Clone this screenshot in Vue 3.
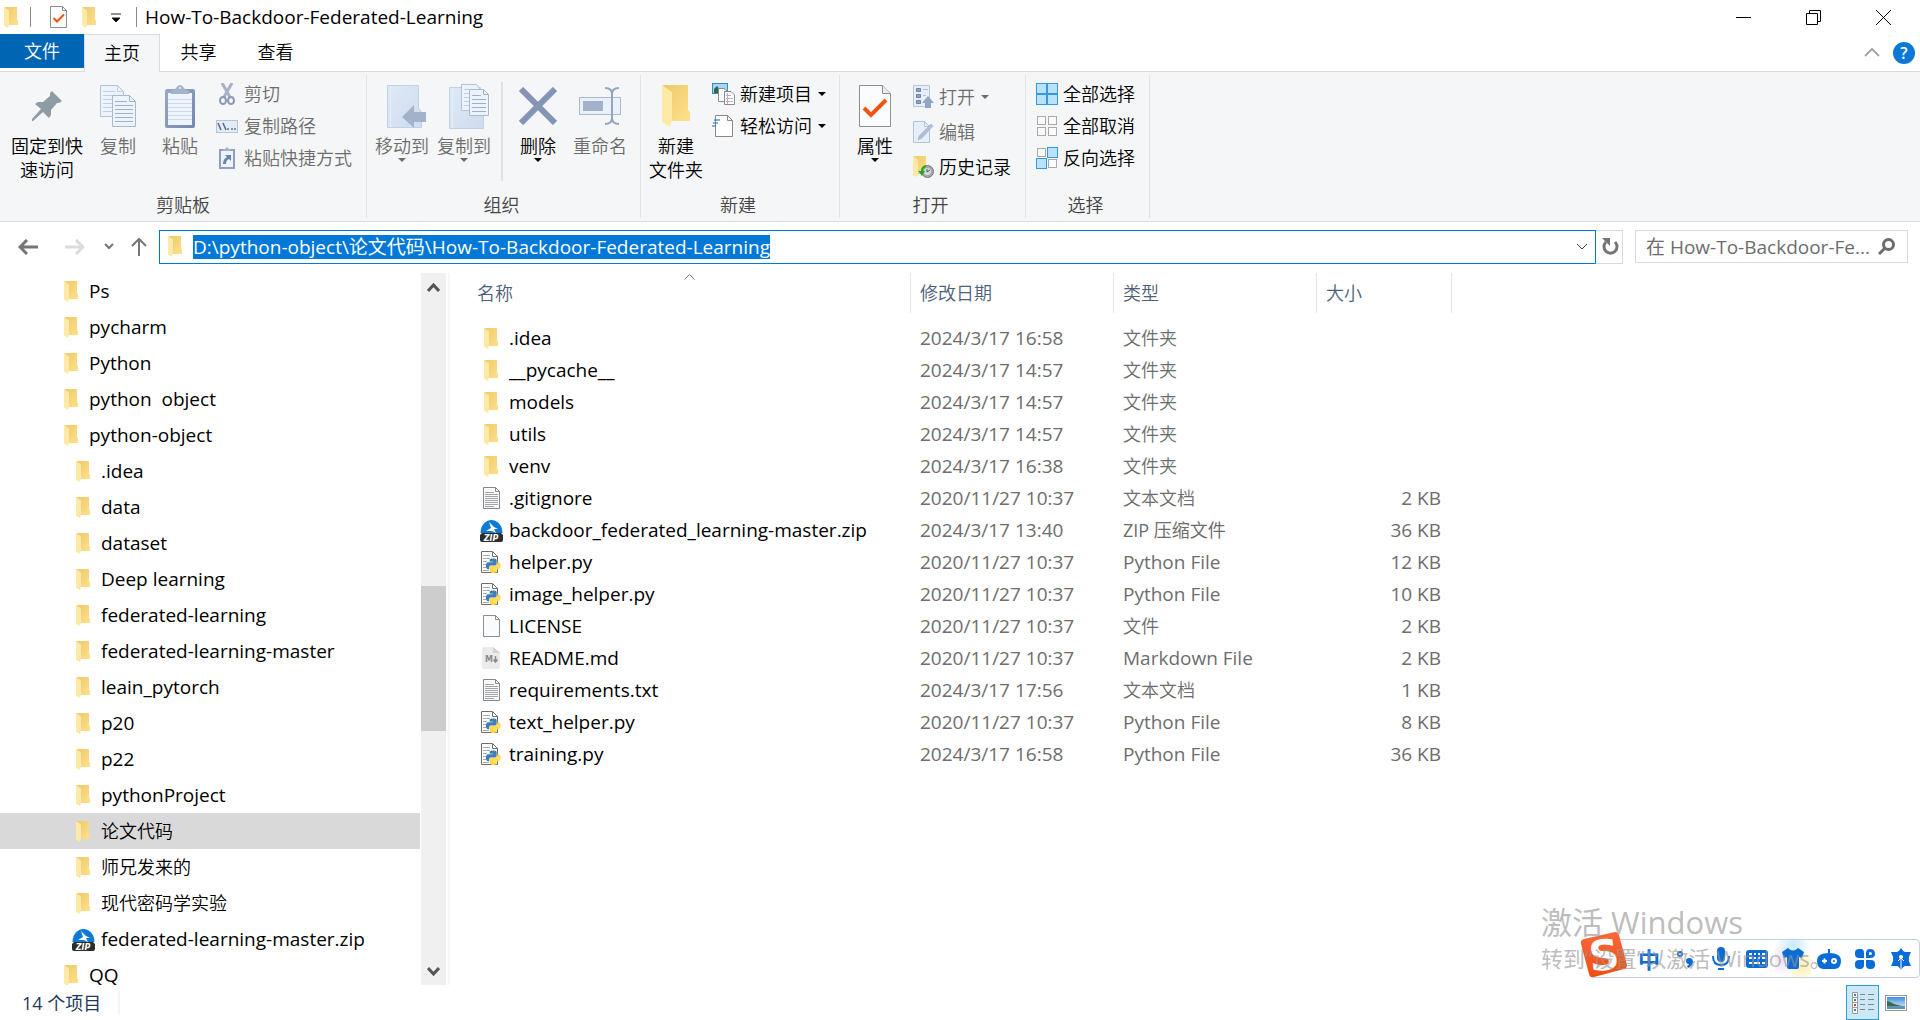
<script setup>
import { ref, onMounted } from 'vue'

const address = ref('D:\\python-object\\论文代码\\How-To-Backdoor-Federated-Learning')
const search = ref('')
const addressInput = ref(null)

onMounted(() => {
  addressInput.value.focus()
  addressInput.value.select()
})

// Latin-only names are set one pixel larger than Chinese ones
const isLatin = (text) => /^[\x20-\x7e]+$/.test(text)

const tabs = ['共享', '查看']

const tree = [
  { name: 'Ps', level: 0, icon: 'folder' },
  { name: 'pycharm', level: 0, icon: 'folder' },
  { name: 'Python', level: 0, icon: 'folder' },
  { name: 'python  object', level: 0, icon: 'folder' },
  { name: 'python-object', level: 0, icon: 'folder' },
  { name: '.idea', level: 1, icon: 'folder' },
  { name: 'data', level: 1, icon: 'folder' },
  { name: 'dataset', level: 1, icon: 'folder' },
  { name: 'Deep learning', level: 1, icon: 'folder' },
  { name: 'federated-learning', level: 1, icon: 'folder' },
  { name: 'federated-learning-master', level: 1, icon: 'folder' },
  { name: 'leain_pytorch', level: 1, icon: 'folder' },
  { name: 'p20', level: 1, icon: 'folder' },
  { name: 'p22', level: 1, icon: 'folder' },
  { name: 'pythonProject', level: 1, icon: 'folder' },
  { name: '论文代码', level: 1, icon: 'folder', selected: true },
  { name: '师兄发来的', level: 1, icon: 'folder' },
  { name: '现代密码学实验', level: 1, icon: 'folder' },
  { name: 'federated-learning-master.zip', level: 1, icon: 'zip' },
  { name: 'QQ', level: 0, icon: 'folder' },
]

const files = [
  { name: '.idea', date: '2024/3/17 16:58', type: '文件夹', size: '', icon: 'folder' },
  { name: '__pycache__', date: '2024/3/17 14:57', type: '文件夹', size: '', icon: 'folder' },
  { name: 'models', date: '2024/3/17 14:57', type: '文件夹', size: '', icon: 'folder' },
  { name: 'utils', date: '2024/3/17 14:57', type: '文件夹', size: '', icon: 'folder' },
  { name: 'venv', date: '2024/3/17 16:38', type: '文件夹', size: '', icon: 'folder' },
  { name: '.gitignore', date: '2020/11/27 10:37', type: '文本文档', size: '2 KB', icon: 'text' },
  { name: 'backdoor_federated_learning-master.zip', date: '2024/3/17 13:40', type: 'ZIP 压缩文件', size: '36 KB', icon: 'zip' },
  { name: 'helper.py', date: '2020/11/27 10:37', type: 'Python File', size: '12 KB', icon: 'python' },
  { name: 'image_helper.py', date: '2020/11/27 10:37', type: 'Python File', size: '10 KB', icon: 'python' },
  { name: 'LICENSE', date: '2020/11/27 10:37', type: '文件', size: '2 KB', icon: 'blank' },
  { name: 'README.md', date: '2020/11/27 10:37', type: 'Markdown File', size: '2 KB', icon: 'markdown' },
  { name: 'requirements.txt', date: '2024/3/17 17:56', type: '文本文档', size: '1 KB', icon: 'text' },
  { name: 'text_helper.py', date: '2020/11/27 10:37', type: 'Python File', size: '8 KB', icon: 'python' },
  { name: 'training.py', date: '2024/3/17 16:58', type: 'Python File', size: '36 KB', icon: 'python' },
]
</script>

<template>
  <div class="window">
    <!-- Shared icon symbols -->
    <svg class="sprite" width="0" height="0" aria-hidden="true">
      <defs>
        <linearGradient id="g-back" x1="0" y1="0" x2="1" y2="1">
          <stop offset="0" stop-color="#ecca6c" />
          <stop offset="1" stop-color="#ffe08a" />
        </linearGradient>
        <linearGradient id="g-slate" x1="0" y1="0" x2="1" y2="1">
          <stop offset="0" stop-color="#9aa9c6" />
          <stop offset="1" stop-color="#7487ae" />
        </linearGradient>
        <linearGradient id="g-pale" x1="0" y1="0" x2="1" y2="1">
          <stop offset="0" stop-color="#dfe9f6" />
          <stop offset="1" stop-color="#cfdcef" />
        </linearGradient>
        <linearGradient id="g-sky" x1="0" y1="0" x2="0" y2="1">
          <stop offset="0" stop-color="#3f8de0" />
          <stop offset="1" stop-color="#e8f4fd" />
        </linearGradient>
        <linearGradient id="g-orange" x1="0" y1="0" x2="0" y2="1">
          <stop offset="0" stop-color="#f9683a" />
          <stop offset="1" stop-color="#f04e10" />
        </linearGradient>
      </defs>

      <symbol id="i-folder" viewBox="0 0 28 42">
        <path d="M1 0H26V25L28 27V36H8z" fill="url(#g-back)" />
        <path d="M0 0L10 7V35L8 42L0 37z" fill="#ffe9a6" />
      </symbol>
      <symbol id="i-text" viewBox="0 0 17 22">
        <path d="M.5.5H12.5L16.5 4.5V21.5H.5z" fill="#f8f9fa" stroke="#84888b" />
        <path d="M12.5.5V4.5H16.5" fill="none" stroke="#84888b" />
        <path d="M2 5.5H11M2 7.5H15M2 9.5H15M2 11.5H15M2 13.5H15M2 15.5H15M2 17.5H15M2 19.5H11" stroke="#a3a6a9" />
      </symbol>
      <symbol id="i-blank" viewBox="0 0 17 22">
        <path d="M.5.5H12.5L16.5 4.5V21.5H.5z" fill="#fafbfc" stroke="#8b8f92" />
        <path d="M12.5.5V4.5H16.5" fill="none" stroke="#8b8f92" />
      </symbol>
      <symbol id="i-markdown" viewBox="0 0 18 22">
        <path d="M2 0H11L18 6V20Q18 22 16 22H2Q0 22 0 20V2Q0 0 2 0z" fill="#ebebeb" />
        <path d="M11 0L18 6H11z" fill="#d2d2d2" />
        <path d="M13.5 9V15M11.5 12.5L13.5 15L15.5 12.5" stroke="#8a8a8a" stroke-width="1.5" fill="none" />
      </symbol>
      <symbol id="i-python" viewBox="0 0 20 22">
        <path d="M.5.5H11.5L16.5 5.5V21.5H.5z" fill="#fff" stroke="#6e6e6e" />
        <path d="M11.5.5V5.5H16.5" fill="none" stroke="#6e6e6e" />
        <path d="M2 4.5H9M2 7.5H9M2 10.5H6M2 13.5H6M2 16.5H6M2 19.5H8" stroke="#a9a9a9" />
        <g transform="translate(5 7.500) scale(.6)">
          <path fill="#3d7db3" d="M14.250.18l.9.200.730.260.590.300.450.320.340.340.250.340.160.330.100.300.040.260.020.200-.010.130V8.500l-.050.630-.130.550-.210.460-.260.380-.300.310-.330.250-.350.190-.350.140-.330.100-.300.070-.260.040-.210.020H8.770l-.690.050-.590.140-.500.220-.410.270-.330.320-.270.350-.200.360-.150.370-.100.350-.070.320-.040.270-.020.210v3.060H3.170l-.210-.030-.280-.070-.320-.120-.350-.180-.360-.260-.360-.360-.350-.460-.320-.590-.280-.730-.210-.880-.140-1.050-.050-1.230.060-1.220.160-1.040.240-.870.320-.710.360-.570.400-.440.420-.330.420-.240.400-.160.360-.100.320-.050.240-.010h.160l.060.010h8.160v-.830H6.180l-.010-2.750-.020-.370.050-.340.110-.310.170-.280.250-.260.310-.230.380-.200.440-.180.510-.150.580-.120.640-.100.710-.060.770-.040.840-.020z" />
          <path fill="#ffda4b" d="M21.100 6.110l.280.060.320.120.350.180.360.270.360.350.350.470.320.590.280.730.210.880.140 1.040.050 1.230-.060 1.230-.160 1.040-.240.860-.320.710-.360.570-.400.450-.420.330-.420.240-.400.160-.360.090-.320.050-.240.020-.160-.010h-8.220v.820h5.840l.010 2.760.020.360-.050.340-.110.310-.170.290-.250.250-.310.240-.380.200-.440.170-.510.150-.580.130-.640.090-.710.070-.770.040-.840.010-1.270-.040-1.070-.140-.900-.200-.730-.250-.590-.300-.450-.330-.340-.340-.250-.340-.160-.330-.100-.300-.040-.250-.020-.200.010-.130v-5.340l.050-.640.130-.540.210-.460.260-.380.300-.320.330-.240.350-.200.350-.140.330-.100.300-.060.260-.040.210-.020.130-.010h5.840l.690-.050.590-.140.500-.210.410-.280.330-.320.270-.350.200-.360.150-.360.100-.350.070-.320.040-.280.020-.210V6.070h2.090z" />
        </g>
      </symbol>
      <symbol id="i-zip" viewBox="0 0 23 23">
        <path d="M.5 14A11 13 0 0 1 22.5 14z" fill="#0a7ad6" />
        <path d="M9 3L14 8L18 10L14 10L16 14L12 12L6 12L11 9z" fill="#fff" />
        <path d="M2 14H21L23 16V21Q23 23 21 23H2Q0 23 0 21V16z" fill="#2d2d2d" />
      </symbol>
      <symbol id="i-check" viewBox="0 0 32 42">
        <path d="M.5.5H23.500L31.500 8.500V41.500H.5z" fill="#fbfcfd" stroke="#8e8e8e" />
        <path d="M23.500.5V8.500H31.500" fill="#e9ebed" stroke="#8e8e8e" />
        <path d="M5 23L12 30L27 15" fill="none" stroke="#f25410" stroke-width="4" />
      </symbol>
      <symbol id="i-caret" viewBox="0 0 8 4">
        <path d="M0 0H8L4 4z" fill="currentColor" />
      </symbol>
    </svg>

    <!-- Title bar -->
    <header class="title-bar">
      <svg class="folder"><use href="#i-folder" /></svg>
      <span class="bar first"></span>
      <button class="quick props" aria-label="属性">
        <svg width="17" height="22" viewBox="0 0 17 22">
          <path d="M.5.5H12.500L16.500 4.500V21.500H.5z" fill="#fcfcfd" stroke="#8e8e8e" />
          <path d="M12.500.5V4.500H16.500" fill="none" stroke="#8e8e8e" />
          <path d="M3.500 12L7 15.500L14 8.500" fill="none" stroke="#f25410" stroke-width="2" />
        </svg>
      </button>
      <button class="quick" aria-label="新建文件夹"><svg class="folder"><use href="#i-folder" /></svg></button>
      <button class="quick more" aria-label="自定义快速访问工具栏">
        <svg width="10" height="9" viewBox="0 0 10 9"><path d="M0 1H10M1 5H9L5 9z" stroke="#222" stroke-width="1" /></svg>
      </button>
      <span class="bar"></span>
      <h1>How-To-Backdoor-Federated-Learning</h1>
      <div class="window-buttons">
        <button aria-label="最小化"><svg width="15" height="15"><path d="M0 7.500H15" stroke="#000" /></svg></button>
        <button aria-label="还原"><svg width="15" height="15" fill="none" stroke="#000"><path d="M.5 3.500H11.500V14.500H.5z" /><path d="M3.500 3.500V.5H14.500V11.500H11.500" /></svg></button>
        <button aria-label="关闭"><svg width="15" height="15"><path d="M0 0L15 15M15 0L0 15" stroke="#000" /></svg></button>
      </div>
    </header>

    <!-- Ribbon tabs -->
    <nav class="tabs">
      <button class="tab file">文件</button>
      <button class="tab active">主页</button>
      <button v-for="tab in tabs" :key="tab" class="tab">{{ tab }}</button>
      <div class="tab-tools">
        <button aria-label="最小化功能区"><svg width="16" height="9" viewBox="0 0 16 9"><path d="M1 8L8 1L15 8" fill="none" stroke="#a6a6a6" stroke-width="2" /></svg></button>
        <button class="help" aria-label="帮助">?</button>
      </div>
    </nav>

    <!-- Ribbon -->
    <section class="ribbon">
      <div class="group clipboard">
        <div class="group-body">
          <button class="big wide">
            <span class="pic"><svg width="30" height="30" viewBox="0 0 30 30"><path d="M20 0L30 10L27 12L25 12L19 19L19 24L17 27L11 21L1 30H0V28L9 18L3 13L6 11L11 11L18 5L18 2z" fill="#909ca3" /></svg></span>
            <span>固定到快</span><span>速访问</span>
          </button>
          <button class="big off">
            <span class="pic"><svg width="36" height="42" viewBox="0 0 36 42">
              <path d="M.5.5H17.500L23.500 6.500V31.500H.5z" fill="#edf3fb" stroke="#b3c2da" />
              <path d="M17.500.5V6.500H23.500M3 6.500H15M3 10.500H20M3 14.500H12M3 18.500H12M3 22.500H12M3 26.500H12" fill="none" stroke="#c2cfe3" />
              <path d="M12.500 10.500H29.500L35.500 16.500V41.500H12.500z" fill="#edf3fb" stroke="#a9b9d3" />
              <path d="M29.500 10.500V16.500H35.500M15 16.500H27M15 20.500H33M15 24.500H33M15 28.500H33M15 32.500H33M15 36.500H33" fill="none" stroke="#9fb0cc" />
            </svg></span>
            <span>复制</span>
          </button>
          <button class="big off">
            <span class="pic"><svg width="30" height="43" viewBox="0 0 30 43">
              <rect y="4" width="30" height="39" rx="2" fill="url(#g-slate)" />
              <rect x="3" y="8" width="24" height="32" fill="#edf4fc" />
              <path d="M3 14.500H27M3 18.500H27M3 22.500H27M3 26.500H27M3 30.500H27M3 34.500H27" stroke="#cdd8e8" />
              <path d="M6 9V6Q10 5 11 3Q15-3 19 3Q20 5 24 6V9z" fill="#a4b2cb" />
              <circle cx="15" cy="3" r="1" fill="#f5f6f7" />
            </svg></span>
            <span>粘贴</span>
          </button>
          <div class="small-list">
            <button class="small off"><span class="mini"><svg width="16" height="22" viewBox="0 0 16 22" fill="none"><path d="M3 0L11 14M13 0L5 14" stroke="#a7b2c6" stroke-width="3" /><ellipse cx="4" cy="17.500" rx="3" ry="3.500" stroke="#8998b6" stroke-width="2" /><ellipse cx="12" cy="17.500" rx="3" ry="3.500" stroke="#8998b6" stroke-width="2" /></svg></span>剪切</button>
            <button class="small off"><span class="mini"><svg width="22" height="13" viewBox="0 0 22 13"><rect x=".5" y=".5" width="21" height="12" fill="#e3edf9" stroke="#b6c3da" /><path d="M2 3L5 10M7 3L10 10" stroke="#52698f" stroke-width="1.500" /><path d="M11 9H13M15 9H17M18 9H20" stroke="#7f91b3" stroke-width="2" /></svg></span>复制路径</button>
            <button class="small off"><span class="mini"><svg width="16" height="22" viewBox="0 0 16 22"><rect x="1" y="3" width="14" height="18" fill="#edf4fc" stroke="#8ea0c1" stroke-width="2" /><path d="M4 4V2H6L8 0L10 2H12V4z" fill="#a4b2cb" /><path d="M6 8H12V14L10 12Q7 13 7 17H4Q4 12 8 10z" fill="#6f83aa" /></svg></span>粘贴快捷方式</button>
          </div>
        </div>
        <div class="group-name">剪贴板</div>
      </div>

      <div class="group organize">
        <div class="group-body">
          <button class="big off">
            <span class="pic"><svg width="48" height="43" viewBox="-9 0 48 43">
              <path d="M.5.5H31.500V23L34.500 27V42.500H.5z" fill="url(#g-pale)" stroke="#c3d1e6" /><path d="M3.500 1V42" stroke="#e6eef8" />
              <path d="M15 32L27 20V27H39V37H27V43z" fill="#a3b1cb" />
            </svg></span>
            <span>移动到</span><svg class="caret"><use href="#i-caret" /></svg>
          </button>
          <button class="big off">
            <span class="pic"><svg width="50" height="45" viewBox="-10 0 50 45">
              <path d="M.5 3.500H31.500V26H34.500V44.500H.5z" fill="url(#g-pale)" stroke="#c3d1e6" /><path d="M3.500 4V44" stroke="#e6eef8" />
              <path d="M12.500.5H27.500L31.500 5.500V26.500H12.500z" fill="#edf3fb" stroke="#b3c2da" />
              <path d="M15 5.500H25M15 9.500H20M15 13.500H20M15 17.500H20M15 21.500H20" stroke="#c2cfe3" />
              <path d="M20.500 5.500H34.500L39.500 10.500V31.500H20.500z" fill="#edf3fb" stroke="#a9b9d3" />
              <path d="M34.500 5.500V10.500H39.500M23 11.500H32M23 15.500H37M23 19.500H37M23 23.500H37M23 27.500H37" fill="none" stroke="#9fb0cc" />
            </svg></span>
            <span>复制到</span><svg class="caret"><use href="#i-caret" /></svg>
          </button>
          <span class="divider"></span>
          <button class="big">
            <span class="pic"><svg width="38" height="38" viewBox="0 0 38 38"><path d="M2 2L36 36M36 2L2 36" stroke="#8394b4" stroke-width="6" /></svg></span>
            <span>删除</span><svg class="caret"><use href="#i-caret" /></svg>
          </button>
          <button class="big off">
            <span class="pic"><svg width="42" height="38" viewBox="0 0 42 38">
              <rect x=".5" y="10.500" width="41" height="17" fill="#e9f1fb" stroke="#a9b9d3" /><rect x="4" y="14" width="20" height="10" fill="#a3b1cb" />
              <path d="M26 1Q33 1 33 7V31Q33 37 26 37M40 1Q33 1 33 7M33 31Q33 37 40 37" fill="none" stroke="#95a4c0" stroke-width="2" />
            </svg></span>
            <span>重命名</span>
          </button>
        </div>
        <div class="group-name">组织</div>
      </div>

      <div class="group create">
        <div class="group-body">
          <button class="big"><span class="pic"><svg width="28" height="42"><use href="#i-folder" /></svg></span><span>新建</span><span>文件夹</span></button>
          <div class="small-list">
            <button class="small"><span class="mini"><svg width="23" height="22" viewBox="0 0 23 22"><rect x=".5" y=".5" width="15" height="10" fill="#a8d7f1" stroke="#2f8bc0" /><path d="M2 10V6L5 3L8 7V10z" fill="#36654f" /><path d="M6.500 5.500H12L15.500 8.500V18.500H6.500z" fill="#fff" stroke="#8b8b8b" /><path d="M12.500 8.500H19L22.500 12V21.500H12.500z" fill="#fff" stroke="#8b8b8b" /><path d="M14 12.500H19M14 15.500H21M14 18.500H21" stroke="#9cb8d8" /><path d="M15.500 10V21" stroke="#e3a3a3" /></svg></span>新建项目<svg class="caret"><use href="#i-caret" /></svg></button>
            <button class="small"><span class="mini"><svg width="23" height="22" viewBox="0 0 23 22"><path d="M3.500.5H15.500L20.500 5.500V21.500H3.500z" fill="#fff" stroke="#888" /><path d="M15.500.5V5.500H20.500" fill="none" stroke="#888" /><path d="M2 5H8M1 8H6M0 11H4" stroke="#1b6cab" stroke-width="1" /></svg></span>轻松访问<svg class="caret"><use href="#i-caret" /></svg></button>
          </div>
        </div>
        <div class="group-name">新建</div>
      </div>

      <div class="group open">
        <div class="group-body">
          <button class="big"><span class="pic"><svg width="32" height="42"><use href="#i-check" /></svg></span><span>属性</span><svg class="caret"><use href="#i-caret" /></svg></button>
          <div class="small-list tall">
            <button class="small off"><span class="mini"><svg width="21" height="23" viewBox="0 0 21 23"><path d="M.5.5H16.500V21.500H.5z" fill="#e6eefa" stroke="#b9c7dd" /><path d="M3.500 3.500H7.500V6.500H3.500zM3.500 9.500H7.500V12.500H3.500zM3.500 15.500H7.500V18.500H3.500z" fill="#8fa2c2" stroke="#6f84aa" /><path d="M10 4.500H15M10 10.500H13" stroke="#b3c0d6" /><path d="M15 11L21 18H18V23H12V18H9z" fill="#93a4c3" /></svg></span>打开<svg class="caret"><use href="#i-caret" /></svg></button>
            <button class="small off"><span class="mini"><svg width="21" height="22" viewBox="0 0 21 22"><path d="M.5.5H11.500L16.500 5.500V21.500H.5z" fill="#e6eefa" stroke="#b3c2da" /><path d="M11.500.5V5.500H16.500" fill="none" stroke="#b3c2da" /><path d="M5 19L6 15L18 3L20 5L9 17z" fill="#afbdd6" stroke="#98a9c7" stroke-width=".5" /></svg></span>编辑</button>
            <button class="small"><span class="mini"><svg width="21" height="22" viewBox="0 0 21 22"><path d="M1 0H13V18H4z" fill="url(#g-back)" /><path d="M0 0L5 4V19L4 21L0 19z" fill="#ffe9a6" /><circle cx="14.500" cy="15.500" r="6" fill="#a5a9ad" stroke="#74787c" /><circle cx="14.500" cy="15.500" r="3.500" fill="#d6d8da" /><path d="M14 13V16L17 14" fill="none" stroke="#555" /><path d="M13 9Q8 10 8 15H5L9 20L12 15H10Q10 12 13 11z" fill="#25a822" /></svg></span>历史记录</button>
          </div>
        </div>
        <div class="group-name">打开</div>
      </div>

      <div class="group select">
        <div class="group-body">
          <div class="small-list">
            <button class="small"><span class="mini"><svg width="22" height="22" viewBox="0 0 22 22" fill="#b9e2fd" stroke="#3797e0" stroke-width="1"><rect x=".5" y=".5" width="10" height="10" /><rect x="11.500" y=".5" width="10" height="10" /><rect x=".5" y="11.500" width="10" height="10" /><rect x="11.500" y="11.500" width="10" height="10" /></svg></span>全部选择</button>
            <button class="small"><span class="mini"><svg width="22" height="22" viewBox="0 0 22 22" fill="#fbfbfb" stroke="#a9a9a9"><rect x="1.500" y="1.500" width="8" height="8" /><rect x="12.500" y="1.500" width="8" height="8" /><rect x="1.500" y="12.500" width="8" height="8" /><rect x="12.500" y="12.500" width="8" height="8" /></svg></span>全部取消</button>
            <button class="small"><span class="mini"><svg width="22" height="22" viewBox="0 0 22 22" fill="#fbfbfb" stroke="#a9a9a9"><rect x="1.500" y="1.500" width="8" height="8" /><rect x="12.500" y="12.500" width="8" height="8" /><g fill="#b9e2fd" stroke="#3797e0"><rect x="11.500" y=".5" width="10" height="10" /><rect x=".5" y="11.500" width="10" height="10" /></g></svg></span>反向选择</button>
          </div>
        </div>
        <div class="group-name">选择</div>
      </div>
    </section>

    <!-- Address row -->
    <section class="address-row">
      <div class="history">
        <button aria-label="后退"><svg width="20" height="16" viewBox="0 0 20 16" fill="none" stroke="#757575" stroke-width="3"><path d="M2 8H20M9 1L2 8L9 15" /></svg></button>
        <button aria-label="前进"><svg width="20" height="16" viewBox="0 0 20 16" fill="none" stroke="#dcdcdc" stroke-width="3"><path d="M0 8H18M11 1L18 8L11 15" /></svg></button>
        <button aria-label="最近浏览的位置"><svg width="10" height="7" viewBox="0 0 10 7" fill="none" stroke="#757575" stroke-width="2"><path d="M1 1L5 5L9 1" /></svg></button>
        <button aria-label="上移"><svg width="16" height="19" viewBox="0 0 16 19" fill="none" stroke="#757575" stroke-width="2"><path d="M8 19V2M1 9L8 2L15 9" /></svg></button>
      </div>
      <div class="address">
        <svg class="folder"><use href="#i-folder" /></svg>
        <input ref="addressInput" v-model="address" aria-label="地址" spellcheck="false" />
        <button aria-label="以前的位置"><svg width="12" height="7" viewBox="0 0 12 7" fill="none" stroke="#444" stroke-width="1"><path d="M1 1L6 6L11 1" /></svg></button>
      </div>
      <button class="refresh" aria-label="刷新"><svg width="18" height="18" viewBox="0 0 18 18"><path d="M4 4A6.500 6.500 0 1 0 13 4" fill="none" stroke="#757575" stroke-width="3" /><path d="M0 0H8V8z" fill="#757575" /></svg></button>
      <label class="search">
        <input v-model="search" placeholder="在 How-To-Backdoor-Fe..." aria-label="搜索" />
        <svg width="17" height="17" viewBox="0 0 17 17" fill="none" stroke="#6d6d6d"><circle cx="10.500" cy="6.500" r="5" stroke-width="3" /><path d="M7 10L1 16" stroke-width="3" /></svg>
      </label>
    </section>

    <!-- Folder tree and file list -->
    <main class="content">
      <nav class="tree" aria-label="导航窗格">
        <ul>
          <li v-for="node in tree" :key="node.name + node.level">
            <a href="#" class="node" :class="{ nested: node.level === 1, selected: node.selected, latin: isLatin(node.name) }">
              <span class="icon">
                <svg :class="node.icon">
                  <use :href="'#i-' + node.icon" />
                  <text v-if="node.icon === 'zip'" class="badge zip-badge" x="11" y="22">ZIP</text>
                </svg>
              </span>{{ node.name }}
            </a>
          </li>
        </ul>
      </nav>
      <div class="scrollbar">
        <button aria-label="向上滚动"><svg width="13" height="9" viewBox="0 0 13 9" fill="none" stroke="#555" stroke-width="3"><path d="M1 8L6.500 2L12 8" /></svg></button>
        <div class="track"><span class="before"></span><span class="thumb"></span><span class="after"></span></div>
        <button aria-label="向下滚动"><svg width="13" height="9" viewBox="0 0 13 9" fill="none" stroke="#555" stroke-width="3"><path d="M1 1L6.500 7L12 1" /></svg></button>
      </div>
      <section class="files">
        <table>
          <colgroup><col class="c-name" /><col class="c-date" /><col class="c-date" /><col class="c-size" /></colgroup>
          <thead>
            <tr>
              <th scope="col"><div>名称<svg class="sort" width="11" height="6" viewBox="0 0 11 6"><path d="M.5 5.500L5.500.5L10.500 5.500" fill="none" stroke="#777" /></svg></div></th>
              <th scope="col"><div>修改日期</div></th>
              <th scope="col"><div>类型</div></th>
              <th scope="col"><div>大小</div></th>
            </tr>
          </thead>
          <tbody>
            <tr v-for="file in files" :key="file.name">
              <td class="name latin">
                <div>
                  <span class="icon">
                    <svg :class="file.icon">
                      <use :href="'#i-' + file.icon" />
                      <text v-if="file.icon === 'zip'" class="badge zip-badge" x="11" y="22">ZIP</text>
                      <text v-if="file.icon === 'markdown'" class="badge md-badge" x="3" y="15">M</text>
                    </svg>
                  </span>{{ file.name }}
                </div>
              </td>
              <td class="latin">{{ file.date }}</td>
              <td :class="{ latin: isLatin(file.type), mixed: file.icon === 'zip' }">{{ file.type }}</td>
              <td class="size latin">{{ file.size }}</td>
            </tr>
          </tbody>
        </table>
      </section>
    </main>

    <!-- Status bar -->
    <footer class="status">
      <span class="count">14 个项目</span>
      <div class="views">
        <button class="view on" aria-label="详细信息"><svg width="22" height="22" viewBox="0 0 22 22"><path d="M.5.5H5.500V21.500H.5zM.5 5.500H5.500M.5 10.500H5.500M.5 15.500H5.500" fill="#fff" stroke="#9a9a9a" /><path d="M2 3H4M2 18H4" stroke="#3b78b5" stroke-width="2" /><path d="M2 8H4" stroke="#4d8f3e" stroke-width="2" /><path d="M2 13H4" stroke="#b5482d" stroke-width="2" /><path d="M8 2.500H13M16 2.500H22M8 7.500H13M16 7.500H22M8 12.500H13M16 12.500H22M8 17.500H13M16 17.500H22" stroke="#7d8a90" /></svg></button>
        <button class="view" aria-label="大图标"><svg width="22" height="16" viewBox="0 0 22 16"><rect x=".5" y=".5" width="21" height="15" fill="#fff" stroke="#9a9a9a" /><rect x="2" y="2" width="18" height="12" fill="url(#g-sky)" /><path d="M2 6Q6 7 9 9L17 11H2z" fill="#3f6a4a" /><path d="M2 11H20V14H2z" fill="#5d93b4" /></svg></button>
      </div>
    </footer>

    <!-- Floating input-method bar -->
    <aside class="ime">
      <svg class="logo" width="48" height="46" viewBox="0 0 48 46">
        <path d="M4 7L35 0Q38 0 39 3L47 33Q47 36 44 37L14 45Q10 46 9 42L1 12Q0 8 4 7z" fill="url(#g-orange)" />
        <text x="24" y="38" text-anchor="middle" transform="rotate(-6 24 23)" font-family="DejaVu Sans" font-weight="700" font-size="42" fill="#fff">S</text>
      </svg>
      <button class="lang">中</button>
      <button aria-label="标点"><svg width="18" height="18" viewBox="0 0 18 18"><circle cx="4" cy="4" r="2" fill="none" stroke="#0a6cd6" stroke-width="2" /><path d="M13 8Q17 8 17 12Q16 16 12 18L11 16Q13 15 13 14Q10 14 10 11Q10 8 13 8z" fill="#0a6cd6" /></svg></button>
      <button aria-label="语音"><svg width="18" height="24" viewBox="0 0 18 24" fill="none"><rect x="5" y="0" width="8" height="15" rx="4" fill="#0a6cd6" /><path d="M1 9Q1 18 9 18Q17 18 17 9" stroke="#0a6cd6" stroke-width="2" /><path d="M6 22H12" stroke="#0a6cd6" stroke-width="2" /></svg></button>
      <button aria-label="键盘"><svg width="22" height="18" viewBox="0 0 22 18"><rect width="22" height="18" rx="3" fill="#0a6cd6" /><path d="M3 4H6M8 4H10M12 4H14M16 4H19M3 8H6M8 8H10M12 8H14M16 8H19M3 13H6M8 13H14M16 13H19" stroke="#fff" stroke-width="2" /></svg></button>
      <button class="skin" aria-label="皮肤"><svg width="22" height="21" viewBox="0 0 22 21"><path d="M6 0Q11 5 16 0L22 4L20 10L17 9V19Q17 21 15 21H7Q5 21 5 19V9L2 10L0 4z" fill="#0a6cd6" /></svg></button>
      <button aria-label="智能助手"><svg width="24" height="20" viewBox="0 0 24 20"><path d="M12 0V6" stroke="#0a6cd6" stroke-width="2" /><path d="M12 4Q24 4 24 12Q24 19 18 20H6Q0 19 0 12Q0 4 12 4z" fill="#0a6cd6" /><path d="M5 12H10M7.500 9.500V14.500" stroke="#fff" stroke-width="2" /><circle cx="17" cy="12" r="2" fill="none" stroke="#fff" stroke-width="2" /></svg></button>
      <button aria-label="工具箱"><svg width="20" height="20" viewBox="0 0 20 20" fill="#0a6cd6"><path d="M4 0H6Q9 0 9 4V9H4Q0 9 0 5V4Q0 0 4 0z" /><path d="M15 1.500Q18.500 1.500 18.500 5Q18.500 7.500 15 7.500H12.500V4Q12.500 1.500 15 1.500z" fill="none" stroke="#0a6cd6" stroke-width="3" /><path d="M4 11H9V16Q9 20 5 20H4Q0 20 0 16V15Q0 11 4 11z" /><path d="M11 11H16Q20 11 20 15V16Q20 20 16 20H15Q11 20 11 16z" /></svg></button>
      <button aria-label="设置"><svg width="20" height="22" viewBox="0 0 20 22"><path d="M10 0L13 4H20L17 11L20 18H13L10 22L7 18H0L3 11L0 4H7z" fill="#0a6cd6" /><circle cx="10" cy="11" r="8" fill="#0a6cd6" /><circle cx="10" cy="9" r="2" fill="#fff" /><path d="M10 22V10M7 13L10 10L13 13" fill="none" stroke="#fff" stroke-width="1" /></svg></button>
    </aside>

    <!-- Activation notice -->
    <div class="notice">
      <p class="head">激活 Windows</p>
      <p>转到“设置”以激活 Windows。</p>
    </div>
  </div>
</template>

<style>
body {
  margin: 0;
  overflow: hidden;
}
</style>

<style scoped>
.window {
  position: relative;
  display: flex;
  flex-direction: column;
  height: 100vh;
  background: #fff;
  color: #000;
  font: 350 18px/24px "Open Sans", "Noto Sans CJK SC", sans-serif;
}
.sprite {
  position: absolute;
}
.latin {
  font-size: 19px;
  font-weight: 400;
}
button,
input {
  margin: 0;
  padding: 0;
  border: 0;
  background: none;
  color: inherit;
  font: inherit;
}
button {
  display: flex;
  align-items: center;
  justify-content: center;
}
svg {
  display: block;
  flex: none;
}
.folder {
  width: 14px;
  height: 21px;
}
.zip {
  width: 23px;
  height: 23px;
}
.text,
.blank {
  width: 17px;
  height: 22px;
}
.markdown {
  width: 18px;
  height: 22px;
}
.python {
  width: 20px;
  height: 22px;
}
.caret {
  width: 8px;
  height: 4px;
}
.badge {
  font: 700 8px "DejaVu Sans", sans-serif;
}
.zip-badge {
  fill: #fff;
  font-style: italic;
  text-anchor: middle;
}
.md-badge {
  fill: #8a8a8a;
}

/* Title bar */
.title-bar {
  display: flex;
  align-items: center;
  flex: none;
  height: 34px;
  padding: 0 2px 0 4px;
}
.bar {
  width: 1px;
  height: 20px;
  margin-right: 8px;
  background: #8a8a8a;
}
.bar.first {
  margin: 0 19px 0 12px;
}
.quick {
  margin-right: 15px;
}
.title-bar h1 {
  flex: 1;
  margin: 0;
  font-size: 19px;
  font-weight: 400;
  color: #000;
}
.window-buttons {
  display: flex;
  align-self: stretch;
}
.window-buttons button {
  width: 70px;
}

/* Tabs */
.tabs {
  display: flex;
  flex: none;
  height: 37px;
  border-bottom: 1px solid #dadbdc;
}
.tab {
  width: 77px;
  height: 36px;
}
.tab.file {
  width: 84px;
  height: 34px;
  background: #0066b4;
  color: #fff;
}
.tab.active {
  width: 76px;
  height: 38px;
  padding-bottom: 2px;
  border: 1px solid #dadbdc;
  border-bottom: 0;
  background: #f5f6f7;
}
.tab-tools {
  display: flex;
  align-items: center;
  gap: 13px;
  margin-left: auto;
  padding-right: 5px;
}
.help {
  width: 22px;
  height: 22px;
  border-radius: 50%;
  background: #0a78d7;
  color: #fff;
  font-size: 16px;
  font-weight: 600;
  line-height: 22px;
}

/* Ribbon */
.ribbon {
  display: flex;
  flex: none;
  padding: 3px 0;
  border-bottom: 1px solid #dadbdc;
  background: #f5f6f7;
}
.group {
  box-sizing: border-box;
  border-right: 1px solid #e2e3e4;
}
.clipboard {
  width: 367px;
}
.organize {
  width: 274px;
}
.create {
  width: 199px;
}
.open {
  width: 186px;
}
.select {
  width: 124px;
}
.group-body {
  display: flex;
  gap: 8px;
  height: 115px;
  padding: 3px 0 0 8px;
}
.clipboard .group-body {
  padding-left: 11px;
}
.group-name {
  padding: 0 4px 1px 0;
  text-align: center;
  color: #444;
}
.clipboard .group-name {
  padding-right: 0;
}
.big {
  flex-direction: column;
  justify-content: flex-start;
  width: 54px;
  white-space: nowrap;
}
.big.wide {
  width: 72px;
}
.pic {
  display: flex;
  align-items: center;
  justify-content: center;
  height: 56px;
}
.off {
  color: #6d6d6d;
}
.small-list {
  display: flex;
  flex-direction: column;
}
.small {
  justify-content: flex-start;
  height: 32px;
  white-space: nowrap;
}
.tall .small {
  height: 35px;
}
.tall {
  padding-top: 1px;
}
.small .caret {
  margin-left: 6px;
}
.mini {
  display: flex;
  justify-content: center;
  width: 24px;
  margin-right: 5px;
}
.open .mini,
.select .mini {
  justify-content: flex-end;
}
.divider {
  width: 2px;
  height: 99px;
  margin: 4px 0 0 2px;
  background: #e0e2e4;
}

/* Address row */
.address-row {
  box-sizing: border-box;
  display: flex;
  flex: none;
  align-items: center;
  height: 51px;
  padding-bottom: 2px;
}
.history {
  display: grid;
  grid-template-columns: 56px 37px 31px 30px;
  width: 159px;
}
.address {
  box-sizing: border-box;
  display: flex;
  flex: 1;
  align-items: center;
  height: 34px;
  padding-left: 8px;
  border: 1px solid #0078d7;
}
.address input {
  flex: 1;
  min-width: 0;
  height: 24px;
  margin-left: 11px;
  outline: 0;
  font-size: 19px;
  font-weight: 400;
}
.address input::selection {
  background: #0078d7;
  color: #fff;
}
.address button {
  width: 26px;
  height: 30px;
}
.refresh {
  box-sizing: border-box;
  width: 27px;
  height: 34px;
  padding-left: 3px;
  border: 1px solid #d9d9d9;
  border-left: 0;
}
.search {
  box-sizing: border-box;
  display: flex;
  align-items: center;
  width: 273px;
  height: 33px;
  margin: 0 12px;
  padding: 0 12px 0 10px;
  border: 1px solid #d9d9d9;
}
.search input {
  flex: 1;
  min-width: 0;
  outline: 0;
  font-size: 19px;
  font-weight: 400;
}
.search input::placeholder {
  color: #6d6d6d;
  opacity: 1;
}

/* Content */
.content {
  display: flex;
  flex: 1;
  min-height: 0;
}
.tree {
  width: 420px;
  margin-right: 1px;
  overflow: hidden;
}
.tree ul {
  margin: 0;
  padding: 0;
  list-style: none;
}
.node {
  display: flex;
  align-items: center;
  height: 36px;
  padding-left: 59px;
  color: #000;
  text-decoration: none;
  white-space: pre;
}
.node.nested {
  padding-left: 71px;
}
.node.selected {
  background: #d9d9d9;
}
.icon {
  display: flex;
  flex: none;
  justify-content: center;
  width: 24px;
  margin-right: 6px;
}
.scrollbar {
  display: flex;
  flex-direction: column;
  width: 25px;
  margin-right: 2px;
  background: #f0f0f0;
}
.scrollbar button {
  height: 28px;
}
.track {
  display: flex;
  flex: 1;
  flex-direction: column;
}
.before {
  flex: 285;
}
.thumb {
  flex: 145;
  background: #cdcdcd;
}
.after {
  flex: 226;
}
.files {
  flex: 1;
  padding-left: 18px;
  border-left: 2px solid #f7f7f7;
}
table {
  table-layout: fixed;
  width: 984px;
  border-collapse: collapse;
}
.c-name {
  width: 443px;
}
.c-date {
  width: 203px;
}
.c-size {
  width: 135px;
}
th {
  padding: 0 0 9px;
  font-weight: inherit;
  text-align: left;
  color: #4c607a;
}
th div {
  position: relative;
  display: flex;
  align-items: center;
  box-sizing: border-box;
  height: 40px;
  padding-left: 9px;
  border-right: 1px solid #e5e5e5;
}
.sort {
  position: absolute;
  top: 1px;
  left: 50%;
  margin-left: -5px;
}
td {
  height: 32px;
  padding: 0 0 0 9px;
  color: #6d6d6d;
  white-space: nowrap;
}
td.mixed {
  font-weight: 400;
}
td.name {
  padding-left: 11px;
  color: #000;
}
td.name div {
  display: flex;
  align-items: center;
}
td.size {
  padding: 0 11px 0 0;
  text-align: right;
}

/* Status bar */
.status {
  display: flex;
  flex: none;
  align-items: center;
  justify-content: space-between;
  height: 35px;
}
.count {
  padding: 0 17px 0 22px;
  border-right: 2px solid #f5f5f5;
  color: #1e395b;
  font-weight: 400;
}
.views {
  display: flex;
  padding-right: 8px;
}
.view {
  box-sizing: border-box;
  width: 33px;
  height: 35px;
}
.view.on {
  border: 1px solid #26a0da;
  background: #cce8f7;
}

/* Input-method bar */
.ime {
  position: absolute;
  right: 0;
  bottom: 42px;
  box-sizing: border-box;
  display: flex;
  align-items: center;
  height: 39px;
  padding-left: 40px;
  border: 1px solid #c3cfe2;
  border-radius: 4px;
  background: #fff;
}
.ime button {
  width: 36px;
  height: 37px;
}
.logo {
  position: absolute;
  left: -11px;
  bottom: -1px;
}
.ime .lang {
  color: #0a6cd6;
  font-size: 22px;
  font-weight: 700;
}
.ime .skin {
  background:
    radial-gradient(circle at 50% 15%, rgba(190, 232, 246, 0.9), transparent 50%),
    radial-gradient(circle at 20% 55%, rgba(236, 218, 252, 0.9), transparent 45%),
    radial-gradient(circle at 75% 70%, rgba(255, 236, 160, 0.9), transparent 45%);
}

/* Activation notice */
.notice {
  position: absolute;
  right: 91px;
  bottom: 46px;
  width: 288px;
  color: rgba(150, 150, 150, 0.65);
  font-size: 22px;
  font-weight: 400;
  line-height: 32px;
  pointer-events: none;
  white-space: nowrap;
}
.notice p {
  margin: 0;
}
.notice .head {
  font-size: 31px;
  line-height: 40px;
}
</style>
